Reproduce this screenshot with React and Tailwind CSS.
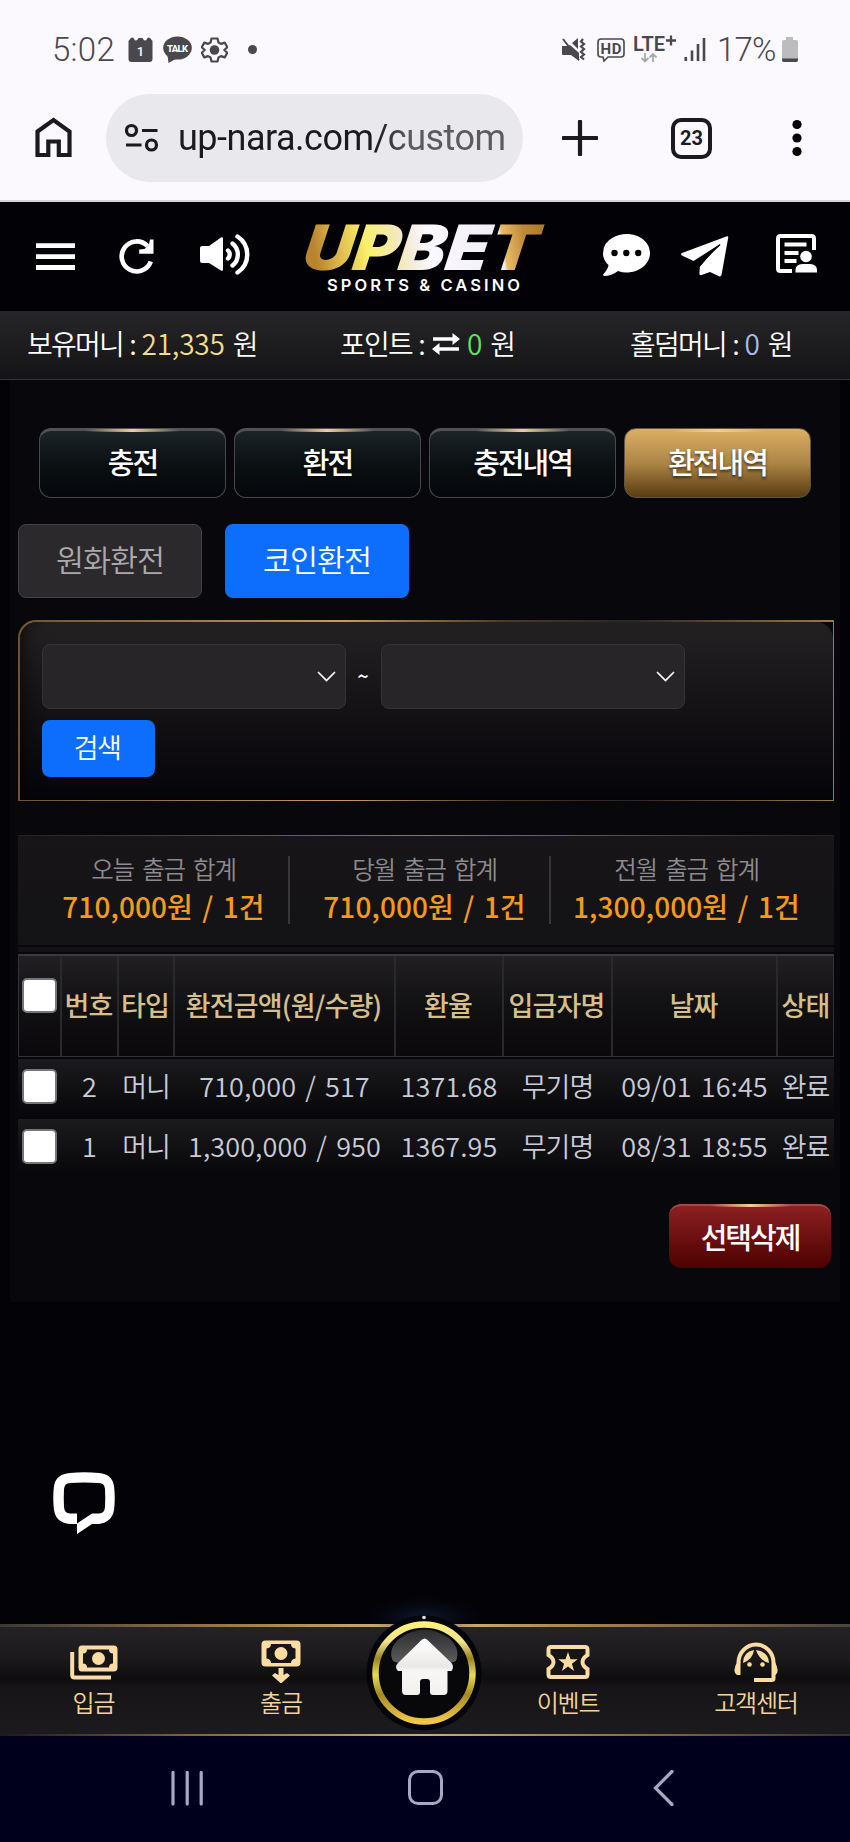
import React, { useState } from "react";

const kr = "font-['Noto_Sans_CJK_KR',sans-serif]";

const tabs = ["충전", "환전", "충전내역", "환전내역"];

const totals = [
    { label: "오늘 출금 합계", value: "710,000원 / 1건" },
    { label: "당월 출금 합계", value: "710,000원 / 1건" },
    { label: "전월 출금 합계", value: "1,300,000원 / 1건" },
];

const columns = ["번호", "타입", "환전금액(원/수량)", "환율", "입금자명", "날짜", "상태"];

const rows = [
    ["2", "머니", "710,000 / 517", "1371.68", "무기명", "09/01 16:45", "완료"],
    ["1", "머니", "1,300,000 / 950", "1367.95", "무기명", "08/31 18:55", "완료"],
];

function StatusBar() {
    return (
        <div className="flex h-[94px] items-start pl-[52px] pt-[32px] text-[#4a484c]">
            <span className="w-[76px] text-[33px] leading-[36px] font-light tracking-[0.3px]">5:02</span>
            <svg className="mt-[5px]" width="25" height="26" viewBox="0 0 25 26">
                <path d="M3 1q1.500-1 2.500 0l1.500 2.500 2-.2L10.500 1h4L16 3.300l2 .2L19.500 1q1.500-1 2.500 0l2.500 3v18q0 3-3 3h-18q-3 0-3-3V4z" fill="#4a484c" />
                <text x="12.500" y="18.500" fontSize="13" textAnchor="middle" fill="#fff" fontWeight="500">1</text>
            </svg>
            <svg className="ml-[10px] mt-[4px]" width="29" height="28" viewBox="0 0 29 28">
                <ellipse cx="14.500" cy="12" rx="14.300" ry="11.500" fill="#4a484c" />
                <path d="M4.500 19l1 8 9-5z" fill="#4a484c" />
                <text x="14.500" y="15.500" fontSize="9.500" textAnchor="middle" fill="#fff" fontWeight="800" textLength="21">TALK</text>
            </svg>
            <svg className="ml-[9px] mt-[5px]" width="27" height="26" viewBox="0 0 27 26">
                <path d="M10.500 1.500h6l1 4 2.500 1.400 3.700-1.300 2.600 4.600-3 2.800 3 2.800-2.600 4.600-3.700-1.300-2.500 1.400-1 4h-6l-1-4-2.500-1.400-3.700 1.300-2.600-4.600 3-2.800-3-2.800 2.600-4.600L7 6.900l2.500-1.400z" fill="none" stroke="#4a484c" strokeWidth="2.200" strokeLinejoin="round" />
                <circle cx="13.500" cy="13" r="4.800" fill="#4a484c" />
            </svg>
            <span className="ml-[20px] mt-[13px] size-[9px] rounded-full bg-[#4a484c]"></span>
            <svg className="ml-[305px] mt-[6px]" width="24" height="23" viewBox="0 0 24 23">
                <path d="M0 8h6l2-1 9 8v8l-8-6H1q-1 0-1-1zM10 5l6-5v11z" fill="#4a484c" />
                <path d="M1 1l16 21" stroke="#4a484c" strokeWidth="2" />
                <path d="M21 1l-2 2.500 3 2.500-3 2.500 3 2.500-3 3 3 2.500-3 2.500 3 2.500" fill="none" stroke="#4a484c" strokeWidth="2.200" />
            </svg>
            <svg className="ml-[11px] mt-[6px]" width="28" height="24" viewBox="0 0 28 24">
                <path d="M4 1h20q3 0 3 3v12q0 3-3 3H11l-4 4-1-4H4q-3 0-3-3V4q0-3 3-3z" fill="none" stroke="#4a484c" strokeWidth="1.600" />
                <text x="14" y="15.500" fontSize="15" textAnchor="middle" fill="#4a484c" fontWeight="700" textLength="21">HD</text>
            </svg>
            <svg className="ml-[8px] mt-[2px] overflow-visible" width="44" height="29" viewBox="0 0 44 29">
                <text x="0" y="17" fontSize="19.500" fill="#4a484c" fontWeight="600" textLength="32" lengthAdjust="spacingAndGlyphs">LTE</text>
                <path d="M38 1.500v10M33 6.500h10" stroke="#4a484c" strokeWidth="2.300" />
                <path d="M12 19v8M8.500 24l3.500 3.500 3.500-3.500M20 28v-8M16.500 23.500L20 20l3.500 3.500" fill="none" stroke="#a9a8ab" strokeWidth="1.800" />
            </svg>
            <svg className="ml-[7px] mt-[5px]" width="22" height="25" viewBox="0 0 22 25">
                <path d="M1.800 24v-4M8 24V13.500M14 24V7M20 24V1" stroke="#4a484c" strokeWidth="2.600" />
            </svg>
            <span className="ml-[11px] w-[64px] text-[33px] leading-[36px] font-light tracking-[-0.8px]">17%</span>
            <svg className="mt-[5px]" width="18" height="26" viewBox="0 0 18 26">
                <path d="M5 0h7v3h3q2 0 2 2v18q0 2-2 2H3q-2 0-2-2V5q0-2 2-2h2z" fill="#bcbbbe" />
                <path d="M1 21.500h16v1.500q0 2-2 2H3q-2 0-2-2z" fill="#4a484c" />
            </svg>
        </div>
    );
}

function AddressBar() {
    return (
        <div className="flex h-[88px] items-center text-[#1b1b1f]">
            <svg className="ml-[35px]" width="37" height="42" viewBox="0 0 37 42">
                <path d="M2.500 14.500L18.500 3 34.500 14.500V38H23.800V24.500H13.300V38H2.500z" fill="none" stroke="#1b1b1f" strokeWidth="4.200" />
            </svg>
            <div className="ml-[34px] flex h-[88px] w-[417px] items-center rounded-full bg-[#e9e8ec] pl-[19px]">
                <svg width="34" height="30" viewBox="0 0 34 30" fill="none" stroke="#1b1b1f" strokeWidth="3.200">
                    <circle cx="6.500" cy="7.500" r="5" />
                    <path d="M17 7.500h15.500M1 22h15.500" />
                    <circle cx="26.500" cy="22" r="5" />
                </svg>
                <span className="ml-[19px] bg-linear-to-r from-[#1b1b1f] from-60% to-[#5b5a5f] to-70% bg-clip-text text-[36px] leading-[50px] whitespace-nowrap tracking-[-0.5px] text-transparent">
                    up-nara.com/custom
                </span>
            </div>
            <svg className="ml-[39px]" width="36" height="36" viewBox="0 0 36 36">
                <path d="M18 1.500v33M1.500 18h33" stroke="#1b1b1f" strokeWidth="4.200" strokeLinecap="round" />
            </svg>
            <span className="ml-[73px] flex size-[41px] items-center justify-center rounded-[10px] border-4 border-[#1b1b1f] text-[20px] font-bold">
                23
            </span>
            <svg className="ml-[80px]" width="10" height="38" viewBox="0 0 10 38">
                <circle cx="5" cy="5.500" r="4.600" />
                <circle cx="5" cy="19" r="4.600" />
                <circle cx="5" cy="32.500" r="4.600" />
            </svg>
        </div>
    );
}

function Header() {
    return (
        <header className="flex h-[109px] items-start bg-[#020105]">
            <svg className="ml-[36px] mt-[41px]" width="39" height="28" viewBox="0 0 39 28">
                <path d="M0 2.700h39M0 13.700h39M0 24.500h39" stroke="#fff" strokeWidth="4.800" />
            </svg>
            <svg className="ml-[44px] mt-[36px]" width="36" height="36" viewBox="0 0 36 36">
                <path d="M31.800 23.500A15 15 0 1 1 28.500 8" fill="none" stroke="#fff" strokeWidth="4.600" />
                <path d="M34.500 1.500V15.800H20.200V11.600L25.500 11 30 6.500 31 1.500z" fill="#fff" />
            </svg>
            <svg className="ml-[45px] mt-[31px]" width="52" height="44" viewBox="0 0 52 44">
                <path d="M2 13h7L21 4.500q2-1 2 1v31q0 2-2 1L9 30H2q-2 0-2-2V15q0-2 2-2z" fill="#fff" />
                <path d="M28 17.500a5.500 5.500 0 0 1 0 8M32.500 10.500a14 14 0 0 1 0 22M37.500 3.500a21.500 21.500 0 0 1 0 36" fill="none" stroke="#fff" strokeWidth="4.400" strokeLinecap="round" />
            </svg>
            <svg className="ml-[51px] mt-[18px] overflow-visible" width="242" height="76" viewBox="0 0 242 76">
                <defs>
                    <linearGradient id="logo" x1="0" x2="1" y1="0.100" y2="0">
                        <stop offset="0" stopColor="#b98430" />
                        <stop offset="0.100" stopColor="#dfb94c" />
                        <stop offset="0.220" stopColor="#f8f06a" />
                        <stop offset="0.340" stopColor="#f2e9b4" />
                        <stop offset="0.420" stopColor="#f6efe6" />
                        <stop offset="0.480" stopColor="#fbf9ff" />
                        <stop offset="0.780" stopColor="#f0edf5" />
                        <stop offset="0.790" stopColor="#e9bd68" />
                        <stop offset="0.880" stopColor="#c08a3a" />
                        <stop offset="1" stopColor="#a5732c" />
                    </linearGradient>
                </defs>
                <text x="0" y="50" transform="skewX(-8) translate(5 0)" fill="url(#logo)" fontFamily="Inter, sans-serif" fontSize="62.500" fontWeight="900" fontStyle="italic" textLength="234" lengthAdjust="spacingAndGlyphs">UPBET</text>
                <text x="24" y="70.500" fill="#fff" fontFamily="Inter, sans-serif" fontSize="16.500" fontWeight="600" textLength="193">SPORTS &amp; CASINO</text>
            </svg>
            <svg className="ml-[58px] mt-[32px]" width="47" height="43" viewBox="0 0 47 43">
                <path d="M23.500 0C37 0 47 8.500 47 19S37 38.500 23.500 38.500q-4.500 0-8.500-1.500Q8.500 42 1 42q-1.500-.5-.5-2Q5 35 5.500 31 0 26 0 19.500 0 8.500 10 3.500 16 0 23.500 0z" fill="#fff" />
                <circle cx="11.500" cy="19" r="3.200" />
                <circle cx="23.300" cy="19" r="3.200" />
                <circle cx="35.200" cy="19" r="3.200" />
            </svg>
            <svg className="ml-[31px] mt-[34px]" width="48" height="42" viewBox="0 0 48 42">
                <path d="M46 .3q1.500-.3 1.200 1.500L40.500 39q-.5 2-2.500 1.300L29 36 20.500 39q-2 .7-2-1.500L19 31 37.500 9 12.500 25 1 19.500q-2-1.500 0-2.500z" fill="#fff" />
                <path d="M18.800 38.500V31L40 7 26 33.500z" fill="#fff" />
                <path d="M39 8.500L18.500 28" stroke="#020105" strokeWidth="1.500" />
            </svg>
            <svg className="ml-[47px] mt-[32px]" width="42" height="40" viewBox="0 0 42 40">
                <path d="M16 37H4.500Q2 37 2 34.500V4.500Q2 2 4.500 2h31Q38 2 38 4.500V16" fill="none" stroke="#fff" strokeWidth="4" />
                <path d="M8.500 10.500h22M8.500 19h14M8.500 27h12" stroke="#fff" strokeWidth="3.800" />
                <circle cx="30" cy="22.500" r="5.800" fill="#fff" />
                <path d="M19.500 38.500V36q0-5.500 7-6h7.500q7 .5 7 6v2.500z" fill="#fff" />
            </svg>
        </header>
    );
}

function MoneyBar() {
    return (
        <div className="flex h-[69px] items-start border-b border-[#333235] bg-linear-to-b from-[#262528] to-[#141316] pt-[12px] pl-[27px] text-[28px] leading-[40px] font-[350] tracking-[-1.8px] [word-spacing:2px] whitespace-nowrap text-white">
            <div className="w-[313px]">
                보유머니 : <span className="tracking-[-0.2px] text-[#f3dd8a]">21,335 </span>원
            </div>
            <div className="flex w-[290px]">
                <span>포인트 :</span>
                <svg className="mr-[7px] ml-[8px] mt-[10px]" width="28" height="22" viewBox="0 0 28 22">
                    <path d="M1 6h22M27 16H5" stroke="#fff" strokeWidth="3.400" />
                    <path d="M20.500 0l7.500 6-7.500 6zM7.500 10L0 16l7.500 6z" fill="#fff" />
                </svg>
                <span>
                    <span className="tracking-[-0.2px] text-[#5be85b]">0 </span>원
                </span>
            </div>
            <div>
                홀덤머니 : <span className="tracking-[-0.2px] text-[#a8bde6]">0 </span>원
            </div>
        </div>
    );
}

function TabButton({ label, active }) {
    return (
        <button
            className={`relative h-[70px] w-[187px] rounded-[12px] border text-[29px] font-medium tracking-[-2px] text-white text-shadow-[0_2px_3px_rgba(0,0,0,.6)] ${
                active
                    ? "border-[#5d5548] bg-linear-to-b from-[#dcaf64] via-[#ad8546] to-[#5a3d12]"
                    : "border-[#47494c] border-t-[3px] border-t-[#505355] bg-linear-to-b from-[#1c2427] via-[#0b1013] to-[#05070a]"
            }`}
        >
            <span className={`absolute left-1/4 h-[3px] w-1/2 bg-linear-to-r from-transparent via-[#f3cf94] to-transparent ${active ? "top-0" : "-top-[2px]"}`}></span>
            <span className={`relative ${active ? "-top-px" : "-top-[2px]"}`}>{label}</span>
        </button>
    );
}

function DateSelect() {
    return (
        <div className="flex h-[65px] w-[304px] items-center justify-end rounded-[8px] border border-[#343335] bg-[#272527] pr-[9px]">
            <svg width="19" height="11" viewBox="0 0 19 11">
                <path d="M1 1l8.500 8.500L18 1" fill="none" stroke="#fff" strokeWidth="1.700" />
            </svg>
        </div>
    );
}

function SearchBox() {
    return (
        <div className="mt-[22px] ml-[18px] w-[816px] rounded-tl-[18px] bg-[linear-gradient(90deg,#6e5435,#c89a5c_40%,#4a3a22_60%,#2a2622_75%,#9c7a44)] p-[1.500px]">
            <div className="bg-[#08070b] rounded-tl-[17px]">
                <div className="h-[178px] rounded-t-[17px] bg-[linear-gradient(180deg,#242123,#121013_55%,#050408)] pt-[22px] pl-[22px] shadow-[inset_14px_0_18px_-10px_rgba(0,0,0,.6)]">
                    <div className="flex items-center text-white">
                        <DateSelect />
                        <span className="w-[35px] text-center text-[20px] font-medium">~</span>
                        <DateSelect />
                    </div>
                    <button className="mt-[11px] block h-[57px] w-[113px] rounded-[8px] bg-[#0d6efd] pr-[2px] pb-px text-[27px] font-[350] tracking-[-1.600px] text-white">
                        검색
                    </button>
                </div>
            </div>
        </div>
    );
}

function Totals() {
    return (
        <div className="mt-[34px] ml-[18px] w-[816px]">
            <div className="h-px bg-linear-to-r from-[#222] via-[#8f7d56] to-[#222]"></div>
            <div className="flex h-[109px] items-start bg-linear-to-b from-[#171517] to-[#131214] pt-[20px] pl-[11px]">
                {totals.map((item, i) => (
                    <div
                        key={i}
                        className={`flex h-[68px] w-[261px] flex-col items-center border-[#37363a] pl-[10px] whitespace-nowrap ${i < 2 ? "border-r-2" : ""}`}
                    >
                        <span className="mt-[-4px] text-[24.500px] leading-[34px] font-[350] tracking-[-1.200px] [word-spacing:4px] text-[#8d8b8f]">
                            {item.label}
                        </span>
                        <span className="mt-px text-[28px] leading-[38px] font-medium tracking-[0.100px] [word-spacing:3px] text-[#f39a1c]">{item.value}</span>
                    </div>
                ))}
            </div>
            <div className="mt-[2px] h-[5px] bg-[#131215]"></div>
        </div>
    );
}

function Check({ checked, onChange }) {
    return (
        <button
            onClick={onChange}
            className="flex size-[35px] items-center justify-center rounded-[5px] border-2 border-[#77757a] bg-white text-[26px] text-[#0d6efd]"
        >
            {checked ? "✓" : ""}
        </button>
    );
}

function HistoryTable() {
    const [selected, setSelected] = useState([]);

    const toggle = (id) => {
        setSelected(selected.includes(id) ? selected.filter((s) => s !== id) : [...selected, id]);
    };

    return (
        <div className="mt-[2px] ml-[18px] w-[816px] text-[27px] tracking-[-1px] whitespace-nowrap">
            <div className="grid h-[103px] grid-cols-[43px_57px_56px_221px_108px_109px_165px_57px] border border-[#333236] border-t-2 border-t-[#3b393d] bg-linear-to-b from-[#211f22] via-[#111012] to-[#0a080a]">
                <div className="border-r-2 border-[#29282b] pt-[22px] pl-[3px]">
                    <Check checked={selected.length === rows.length} onChange={() => setSelected(selected.length === rows.length ? [] : rows.map((r) => r[0]))} />
                </div>
                {columns.map((name, i) => (
                    <div
                        key={i}
                        className={`flex items-center justify-center border-[#29282b] pr-[2px] pb-[2px] font-medium tracking-[-0.800px] text-[#d5c08c] ${i < 6 ? "border-r-2" : ""}`}
                    >
                        {name}
                    </div>
                ))}
            </div>
            {rows.map((row) => (
                <div
                    key={row[0]}
                    className="mt-[2px] grid h-[58px] grid-cols-[43px_57px_56px_221px_108px_109px_165px_57px] items-center bg-linear-to-b from-[#1b1a1d] to-[#07070a] font-[350] text-[#c9cbd8]"
                >
                    <div className="-mt-[3px] pl-[4px]">
                        <Check checked={selected.includes(row[0])} onChange={() => toggle(row[0])} />
                    </div>
                    {row.map((cell, i) => (
                        <div key={i} className={`-mt-[3px] flex justify-center ${/^\d/.test(cell) ? "tracking-[0.100px] [word-spacing:3px]" : ""}`}>
                            {cell}
                        </div>
                    ))}
                </div>
            ))}
        </div>
    );
}

function HomeButton() {
    return (
        <svg className="absolute top-[-61px] left-[317px]" width="216" height="170" viewBox="-40 -40 216 170">
            <defs>
                <linearGradient id="ring" x1="0" x2="0" y1="0" y2="1">
                    <stop offset="0" stopColor="#fbf07c" />
                    <stop offset="0.180" stopColor="#efe28a" />
                    <stop offset="0.350" stopColor="#9c8420" />
                    <stop offset="0.520" stopColor="#e9dc52" />
                    <stop offset="0.720" stopColor="#a38a22" />
                    <stop offset="1" stopColor="#f3c64a" />
                </linearGradient>
                <linearGradient id="gloss" x1="0" x2="0" y1="0" y2="1">
                    <stop offset="0" stopColor="#2c2c2e" />
                    <stop offset="1" stopColor="#5c5c5e" />
                </linearGradient>
                <linearGradient id="house" x1="0" x2="0" y1="0" y2="1">
                    <stop offset="0" stopColor="#fff" />
                    <stop offset="0.500" stopColor="#e9e8e6" />
                    <stop offset="0.560" stopColor="#f7f6f4" />
                    <stop offset="1" stopColor="#f3f2f0" />
                </linearGradient>
                <radialGradient id="glow">
                    <stop offset="0" stopColor="#132748" stopOpacity="0.600" />
                    <stop offset="1" stopColor="#0a1a38" stopOpacity="0" />
                </radialGradient>
            </defs>
            <path d="M10-6h114v40H10z" fill="url(#glow)" />
            <circle cx="67" cy="70" r="57.500" fill="#04050b" />
            <circle cx="67" cy="70" r="48.500" fill="#08080b" stroke="url(#ring)" strokeWidth="6.500" />
            <circle cx="67" cy="14.500" r="1.800" fill="#dfe9ff" />
            <path d="M36 58Q30 46 43 35 67 18 92 35 104 46 99 58 92 62 88 57L67 35 46 57Q42 62 36 58z" fill="url(#gloss)" />
            <path d="M64.500 37q3-3 6 0l24 23q3 4 0 8h-4v20q0 4-4 4H76q-3 0-3-3V79q0-3-3-3h-4q-3 0-3 3v10q0 3-3 3H49q-4 0-4-4V68h-4q-4-4 0-8z" fill="url(#house)" />
        </svg>
    );
}

function BottomNav() {
    return (
        <nav className="relative h-[112px] text-[24px] font-[350] tracking-[-1.2px] text-[#f4d398]">
            <div className="h-[3px] bg-[linear-gradient(90deg,#3a3937,#a88148_30%,#d9b884_50%,#b58a4e_65%,#4a4540)]"></div>
            <div className="flex h-[107px] bg-[linear-gradient(180deg,#242224,#1b191b_30%,#0e0d0e_48%,#161416_55%,#1c1a1c)] leading-[34px]">
                <div className="flex w-[187px] flex-col items-center">
                    <svg className="mt-[17px]" width="48" height="36" viewBox="0 0 48 36">
                        <path d="M11.500 1.500h32q4 0 4 4v18q0 4-4 4h-32q-3 0-3-4v-18q0-4 3-4z" fill="#fbdca2" />
                        <path d="M17 5.500h22q0 4 4 4v10q-4 0-4 4H17q0-4-4-4v-10q4 0 4-4z" fill="#171517" />
                        <circle cx="28.500" cy="14.500" r="6.500" fill="#fbdca2" />
                        <path d="M2.200 8v23q0 2.500 2.500 2.500H41" fill="none" stroke="#fbdca2" strokeWidth="4" />
                    </svg>
                    <span className="mt-[5px]">입금</span>
                </div>
                <div className="flex w-[188px] flex-col items-center">
                    <svg className="mt-[12px]" width="40" height="44" viewBox="0 0 40 44">
                        <path d="M4.500 1.500h31q4 0 4 4v18q0 4-4 4h-31q-4 0-4-4v-18q0-4 4-4z" fill="#fbdca2" />
                        <path d="M10 5h20q0 4 4.500 4.500v10Q30 20 30 24H10q0-4-4.500-4.500v-10Q10 9 10 5z" fill="#171517" />
                        <circle cx="20" cy="14.500" r="6.500" fill="#fbdca2" />
                        <path d="M17.500 29h5v7l3.500-2 3 2.500-9 8-9-8 3-2.500 3.500 2z" fill="#fbdca2" />
                    </svg>
                    <span className="mt-[2px]">출금</span>
                </div>
                <div className="w-[99px]"></div>
                <div className="flex w-[188px] flex-col items-center">
                    <svg className="mt-[17px]" width="44" height="36" viewBox="0 0 44 36">
                        <path d="M5 3h34q2.500 0 2.500 2.500V11q-5 3-5 7t5 7v5.500Q41.500 33 39 33H5q-2.500 0-2.500-2.500V25q5-3 5-7t-5-7V5.500Q2.500 3 5 3z" fill="#171517" stroke="#fbdca2" strokeWidth="4" />
                        <path d="M22 8l2.500 7.300h7.200l-5.800 4.400 2.200 7.300-6.100-4.500-6.100 4.500 2.200-7.300-5.800-4.400h7.200z" fill="#fbdca2" />
                    </svg>
                    <span className="mt-[5px]">이벤트</span>
                </div>
                <div className="flex w-[188px] flex-col items-center">
                    <svg className="mt-[15px]" width="44" height="42" viewBox="0 0 44 42">
                        <path d="M4.500 21A17.500 18.500 0 0 1 39.500 21V36.500Q39.500 38 37.500 38H20" fill="none" stroke="#fbdca2" strokeWidth="4" />
                        <path d="M6.500 20v13H3Q0 31 .5 27.500T3 20zM38 20v13h3.500q2.500-2 2-5.500T41 20z" fill="#fbdca2" />
                        <path d="M9 21Q9 10 20 8 19 17 9 21zM35 21Q35 10 22 8 25 18 35 21z" fill="#fbdca2" />
                        <circle cx="15.500" cy="22.500" r="2.300" fill="#fbdca2" />
                        <circle cx="28.500" cy="22.500" r="2.300" fill="#fbdca2" />
                    </svg>
                    <span className="mt-px">고객센터</span>
                </div>
            </div>
            <div className="h-[2px] bg-[linear-gradient(90deg,#1c1a1c,#8f6b3c_25%,#cfa97a_50%,#8f6b3c_75%,#3a2f28)]"></div>
            <HomeButton />
        </nav>
    );
}

function SystemNav() {
    return (
        <div className="flex h-[106px] items-start bg-[#00001c]">
            <svg className="mt-[35px] ml-[171px]" width="33" height="35" viewBox="0 0 33 35">
                <path d="M2 1.500v31.500M16.200 1.500v31.500M30.200 1.500v31.500" stroke="#a9a7c4" strokeWidth="3.200" strokeLinecap="round" />
            </svg>
            <div className="mt-[34px] ml-[204px] size-[35px] rounded-[10px] border-[3px] border-[#a9a7c4]"></div>
            <svg className="mt-[34px] ml-[210px]" width="21" height="36" viewBox="0 0 21 36">
                <path d="M19 1.500L2.500 18 19 34.500" fill="none" stroke="#a9a7c4" strokeWidth="3.200" strokeLinecap="round" />
            </svg>
        </div>
    );
}

export default function App() {
    return (
        <div className={`h-[1842px] w-[850px] overflow-hidden bg-[#030206] ${kr}`}>
            <div className="h-[202px] border-b-2 border-[#d3d5d9] bg-[#fbf9fe] font-['Roboto',sans-serif]">
                <StatusBar />
                <AddressBar />
            </div>
            <Header />
            <MoneyBar />
            <div className="h-[1244px]">
                <main className="mx-[10px] h-[922px] bg-[#08070b]">
                    <div className="-mx-[10px]">
                        <div className="flex gap-[8px] pt-[48px] pl-[39px]">
                            {tabs.map((t, i) => (
                                <TabButton key={i} label={t} active={i === 3} />
                            ))}
                        </div>
                        <div className="mt-[26px] flex gap-[23px] pl-[18px] text-[30.500px] font-[350] tracking-[-1px]">
                            <button className="h-[74px] w-[184px] rounded-[8px] border border-[#444246] bg-[#2b292c] pb-[2px] text-[#aaa8ab]">원화환전</button>
                            <button className="h-[74px] w-[184px] rounded-[8px] bg-[#0d6efd] pb-[2px] text-white">코인환전</button>
                        </div>
                        <SearchBox />
                        <Totals />
                        <HistoryTable />
                        <div className="mt-[27px] flex justify-end pr-[19px]">
                            <button className="relative h-[64px] w-[162px] rounded-[12px] border-t-2 border-[#a34a4c] bg-linear-to-b from-[#8c2022] to-[#4e0202] text-[29px] font-medium tracking-[-2px] text-white">
                                <span className="absolute -top-[2px] left-1/4 h-[3px] w-1/2 bg-linear-to-r from-transparent via-[#f3cf94] to-transparent"></span>
                                선택삭제
                            </button>
                        </div>
                    </div>
                </main>
                <svg className="mt-[170px] ml-[53px]" width="63" height="64" viewBox="0 0 63 64">
                    <path d="M17 1Q31-.5 46 1 59 2 61 14 62.500 26 61 38 59 50 46 52H39L24 62V52H17Q3 51 1 38-.5 26 1 14 3 2 17 1z" fill="#fff" />
                    <path d="M17 11Q31 10 46 11 51.500 11 52 17 52.500 26 52 35 51.500 41.500 46 41.500H39L24 51.500V41.500H17Q11.500 41.500 11 35 10.500 26 11 17 11.500 11 17 11z" fill="#030206" />
                </svg>
            </div>
            <BottomNav />
            <SystemNav />
        </div>
    );
}
